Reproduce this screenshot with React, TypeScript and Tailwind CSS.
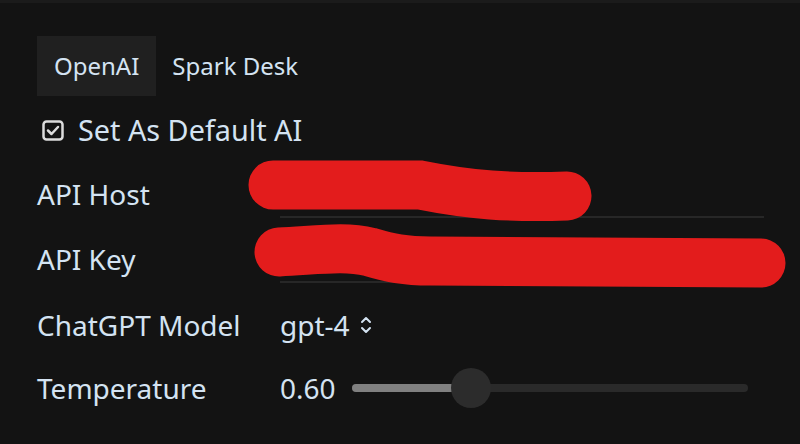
import React, { useState } from "react";

const Scribbles = () => (
  <svg className="pointer-events-none absolute left-0 top-0" width="800" height="444" viewBox="0 0 800 444">
    <path d="M273 185 L420 185 C470 195 510 198 567 196" stroke="#e31c1c" strokeWidth="49" strokeLinecap="round" fill="none" />
    <path d="M279 252 C320 250 345 246 370 252 C390 258 405 261 430 261 L761 263" stroke="#e31c1c" strokeWidth="49" strokeLinecap="round" fill="none" />
  </svg>
);

const App = () => {
  const [tab, setTab] = useState("openai");
  const [isDefault, setIsDefault] = useState(true);
  const [temp, setTemp] = useState(0.6);
  const pct = (temp / 2) * 100;

  return (
    <div className="relative h-[444px] w-[800px] overflow-hidden bg-[#131313] text-[#d4e3f2]" style={{ fontFamily: '"Noto Sans", "Open Sans", sans-serif' }}>
      <div className="h-[3px] bg-[#1b1b1b]" />
      <div className="pl-[37px] pt-[33px]">
        <div className="flex h-[60px] text-[24px]">
          <button
            onClick={() => setTab("openai")}
            className={`px-[17px] ${tab === "openai" ? "bg-[#202020]" : ""}`}
          >
            OpenAI
          </button>
          <button
            onClick={() => setTab("spark")}
            className={`px-[16px] ${tab === "spark" ? "bg-[#202020]" : ""}`}
          >
            Spark Desk
          </button>
        </div>

        <label className="mt-[14px] flex h-[40px] items-center gap-[14px] pl-[5px] text-[28.8px]">
          <span onClick={() => setIsDefault(!isDefault)} className="flex shrink-0">
            <svg className="h-[21px] w-[22px] shrink-0" width="22" height="21" viewBox="0 0 22 21">
              <rect x="1.5" y="1.5" width="19" height="18" rx="3" stroke="#dcdcdc" strokeWidth="2.5" fill="none" />
              {isDefault && <path d="M6 10.5 L9.5 14 L16 7" stroke="#dcdcdc" strokeWidth="2.5" fill="none" strokeLinecap="round" strokeLinejoin="round" />}
            </svg>
          </span>
          Set As Default AI
        </label>

        <div className="grid grid-cols-[243px_484px] text-[28px]">
          <div className="flex h-[68px] items-end pb-[3px]">API Host</div>
          <div className="flex h-[68px] items-end">
            <input className="h-[48px] w-full border-b-2 border-[#272727] bg-transparent outline-none" />
          </div>

          <div className="flex h-[65px] items-end pb-[3px]">API Key</div>
          <div className="flex h-[65px] items-end">
            <input className="h-[48px] w-full border-b-2 border-[#272727] bg-transparent outline-none" />
          </div>

          <div className="flex h-[84px] items-center">ChatGPT Model</div>
          <div className="flex h-[84px] items-center gap-[10px]">
            gpt-4
            <svg className="h-[20px] w-[12px]" width="12" height="20" viewBox="0 0 12 20" fill="none" stroke="#d4e3f2" strokeWidth="2" strokeLinecap="round" strokeLinejoin="round">
              <path d="M2 7 L6 3 L10 7" />
              <path d="M2 13 L6 17 L10 13" />
            </svg>
          </div>

          <div className="flex h-[42px] items-center">Temperature</div>
          <div className="flex h-[42px] items-center gap-[18px]">
            <span className="w-[54px]">{temp.toFixed(2)}</span>
            <div className="relative h-[40px] w-[396px]">
              <div className="absolute left-0 right-0 top-[16px] h-[8px] rounded-full bg-[#2a2a2a]" />
              <div className="absolute left-0 top-[16px] h-[8px] rounded-full bg-[#808080]" style={{ width: `${pct}%` }} />
              <div className="absolute top-0 h-[40px] w-[40px] -translate-x-1/2 rounded-full bg-[#2c2c2c]" style={{ left: `${pct}%` }} />
              <input
                type="range"
                min={0}
                max={2}
                step={0.01}
                value={temp}
                onChange={(e) => setTemp(parseFloat(e.target.value))}
                className="absolute inset-0 opacity-0"
              />
            </div>
          </div>
        </div>
      </div>
      <Scribbles />
    </div>
  );
};

export default App;
